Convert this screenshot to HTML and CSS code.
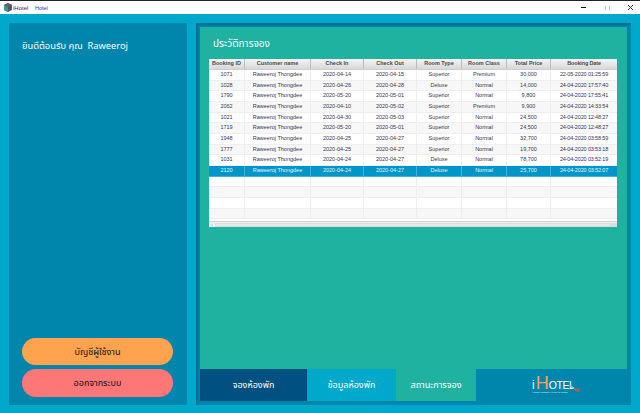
FILE: index.html
```html
<!DOCTYPE html>
<html lang="th">
<head>
<meta charset="utf-8">
<title>iHotel</title>
<link rel="stylesheet" href="styles.css">
</head>
<body>
<header class="titlebar">
  <div class="app">
    <svg class="app-icon" width="8" height="9" viewBox="0 0 8 9"><path d="M4 0 8 2v5L4 9 0 7V2z" fill="#4a5a6a"/><path d="M4 4v5L0 7V2z" fill="#2f9d8f"/><path d="M4 4 8 2 4 0 0 2z" fill="#6b5a78"/></svg>
    <span class="app-name">iHotel</span><span class="app-sub">Hotel</span>
  </div>
  <div class="controls">
    <span class="min"></span>
    <span class="max"></span>
    <svg class="close" width="5" height="5" viewBox="0 0 5 5"><path d="M0 0 5 5M5 0 0 5" stroke="#333" stroke-width="1"/></svg>
  </div>
</header>
<main class="desk">
  <aside class="side">
    <p class="welcome">ยินดีต้อนรับ คุณ&nbsp;&nbsp;Raweeroj</p>
    <div class="side-actions">
      <button class="pill pill-orange">บัญชีผู้ใช้งาน</button>
      <button class="pill pill-red">ออกจากระบบ</button>
    </div>
  </aside>
  <section class="content">
    <div class="sheet">
      <h1 class="sheet-title">ประวัติการจอง</h1>
      <div class="table">
        <div class="row head"><span>Booking ID</span><span>Customer name</span><span>Check In</span><span>Check Out</span><span>Room Type</span><span>Room Class</span><span>Total Price</span><span>Booking Date</span></div>
        <div class="row"><span>1071</span><span>Raweeroj Thongdee</span><span>2020-04-14</span><span>2020-04-15</span><span>Superior</span><span>Premium</span><span>30,000</span><span>22-05-2020 01:25:59</span></div>
        <div class="row alt"><span>1028</span><span>Raweeroj Thongdee</span><span>2020-04-26</span><span>2020-04-28</span><span>Deluxe</span><span>Normal</span><span>14,000</span><span>24-04-2020 17:57:40</span></div>
        <div class="row"><span>1790</span><span>Raweeroj Thongdee</span><span>2020-05-20</span><span>2020-05-01</span><span>Superior</span><span>Normal</span><span>9,800</span><span>24-04-2020 17:55:41</span></div>
        <div class="row alt"><span>2062</span><span>Raweeroj Thongdee</span><span>2020-04-10</span><span>2020-05-02</span><span>Superior</span><span>Premium</span><span>9,900</span><span>24-04-2020 14:33:54</span></div>
        <div class="row"><span>1021</span><span>Raweeroj Thongdee</span><span>2020-04-30</span><span>2020-05-03</span><span>Superior</span><span>Normal</span><span>24,500</span><span>24-04-2020 12:48:27</span></div>
        <div class="row alt"><span>1719</span><span>Raweeroj Thongdee</span><span>2020-05-20</span><span>2020-05-01</span><span>Superior</span><span>Normal</span><span>24,500</span><span>24-04-2020 12:48:27</span></div>
        <div class="row"><span>1948</span><span>Raweeroj Thongdee</span><span>2020-04-25</span><span>2020-04-27</span><span>Superior</span><span>Normal</span><span>32,700</span><span>24-04-2020 03:58:59</span></div>
        <div class="row alt"><span>1777</span><span>Raweeroj Thongdee</span><span>2020-04-25</span><span>2020-04-27</span><span>Superior</span><span>Normal</span><span>19,700</span><span>24-04-2020 03:53:18</span></div>
        <div class="row"><span>1031</span><span>Raweeroj Thongdee</span><span>2020-04-24</span><span>2020-04-27</span><span>Deluxe</span><span>Normal</span><span>78,700</span><span>24-04-2020 03:52:19</span></div>
        <div class="row selected"><span>2120</span><span>Raweeroj Thongdee</span><span>2020-04-24</span><span>2020-04-27</span><span>Deluxe</span><span>Normal</span><span>25,700</span><span>24-04-2020 03:52:07</span></div>
        <div class="row"><span></span><span></span><span></span><span></span><span></span><span></span><span></span><span></span></div>
        <div class="row alt"><span></span><span></span><span></span><span></span><span></span><span></span><span></span><span></span></div>
        <div class="row"><span></span><span></span><span></span><span></span><span></span><span></span><span></span><span></span></div>
        <div class="row alt"><span></span><span></span><span></span><span></span><span></span><span></span><span></span><span></span></div>
        <div class="scrollbar"><span class="arrow">‹</span><span class="track"></span><span class="grip"></span></div>
      </div>
    </div>
    <nav class="tabs">
      <a class="tab tab-book">จองห้องพัก</a>
      <a class="tab tab-room">ข้อมูลห้องพัก</a>
      <a class="tab tab-status">สถานะการจอง</a>
      <div class="logo">
        <div class="logo-box">
          <div class="logo-word"><span class="logo-i">i</span><b>H</b><span class="logo-rest">OTEL</span></div>
          <div class="logo-tag">HOTEL RESERVATION SYSTEM</div>
        </div>
        <svg class="logo-mark" width="10" height="7" viewBox="0 0 10 7"><path d="M0 0 5 3 4 4 0 2z" fill="#8fc6dc"/><path d="M4 3 10 4 9 7 6 6 4 5z" fill="#a0674a"/></svg>
      </div>
    </nav>
  </section>
</main>
</body>
</html>
```
FILE: styles.css
```css
* { box-sizing: border-box; }
html, body { margin: 0; padding: 0; height: 100%; }
body {
  width: 640px;
  height: 413px;
  overflow: hidden;
  display: flex;
  flex-direction: column;
  background: #00a8cc;
  font-family: "Noto Sans", "Noto Sans Thai", "Liberation Sans", sans-serif;
}
.titlebar {
  height: 14px;
  flex: none;
  background: #fff;
  border-top: 1px solid #222;
  display: flex;
  justify-content: space-between;
  align-items: center;
}
.app { display: flex; align-items: center; gap: 1px; padding-left: 4px; }
.app-icon { display: block; }
.app-name { font: 6px "Liberation Sans", sans-serif; color: #402060; width: 21px; }
.app-sub { font: 5.5px "Liberation Sans", sans-serif; color: #333399; }
.controls { display: flex; align-items: center; }
.min { width: 5px; height: 1px; background: #111; margin-right: 19px; }
.max { width: 5px; height: 4px; border-left: 1px solid #bbb; border-right: 1px solid #bbb; margin-right: 18px; }
.close { margin-right: 7px; display: block; }

.desk { flex: 1; display: flex; padding: 9px 9px 8px; gap: 9px; min-height: 0; }
.side {
  width: 178px;
  background: #0085ad;
  display: flex;
  flex-direction: column;
  justify-content: space-between;
  padding: 0 14px 8px 13px;
}
.welcome { margin: 16px 0 0; font-size: 9.3px; line-height: 14px; color: #fff; }
.side-actions { display: flex; flex-direction: column; gap: 4px; }
.pill {
  border: 0;
  padding: 0;
  width: 151px;
  font-family: inherit;
  font-size: 9px;
  color: #111;
  border-radius: 14px;
}
.pill-orange { background: #ffa34f; height: 27px; }
.pill-red { background: #fd7777; height: 28px; }

.content {
  flex: 1;
  background: #0085ad;
  padding: 4px;
  display: flex;
  flex-direction: column;
  box-shadow: inset 2px 2px 2px #006f92;
}
.sheet { flex: 1; background: #1fb2a0; padding: 0 10px 0 9px; display: flex; flex-direction: column; }
.sheet-title { margin: 8px 0 0 4px; height: 24px; font-size: 10px; line-height: 16px; font-weight: 400; color: #fff; }
.table {
  height: 168px;
  background: #fff;
  display: flex;
  flex-direction: column;
  font: 5.5px/1 "Liberation Sans", sans-serif;
  color: #3a3550;
}
.row {
  flex: none;
  height: 10.66px;
  display: grid;
  grid-template-columns: 36px 66px 53px 53px 45px 45px 44px 66px;
  background: #fff;
  border-bottom: 1px solid #eeeeee;
}
.row.alt { background: #f7f7f7; }
.row span {
  display: flex;
  align-items: center;
  justify-content: center;
  white-space: nowrap;
  border-right: 1px solid #eeeeee;
}
.row span:last-child { border-right: 0; letter-spacing: -0.15px; }
.row.head {
  height: 11px;
  font-weight: 700;
  color: #4a4a4a;
  background: linear-gradient(#f4f4f4, #d8d8d8);
  border-bottom: 1px solid #cfcfcf;
}
.row.head span { border-right-color: #bdbdbd; }
.row.selected { background: #0096c9; color: #e4f6fb; border-bottom-color: #3fb2d8; }
.row.selected span { border-right-color: #3fb2d8; }
.scrollbar {
  margin-top: auto;
  height: 6px;
  display: flex;
  align-items: center;
  background: #f1f1f1;
  border-top: 1px solid #cfcfcf;
  color: #999;
}
.arrow { width: 6px; font-size: 5px; text-align: center; }
.track { flex: 1; height: 4px; background: #e8e8e8; border: 1px solid #dcdcdc; }
.grip { width: 6px; height: 4px; background: #dcdcdc; }

.tabs { height: 32px; flex: none; display: flex; }
.tab { display: flex; align-items: center; justify-content: center; font-size: 9px; color: #fff; }
.tab-book { width: 107px; background: #005082; }
.tab-room { width: 89px; background: #00a8cc; }
.tab-status { width: 80px; background: #1fb2a0; }
.logo { flex: 1; display: flex; align-items: center; justify-content: center; padding: 0 0 0 9px; }
.logo-box { display: flex; flex-direction: column; align-items: flex-start; width: 38px; }
.logo-word { font-family: "Liberation Sans", sans-serif; line-height: 13px; height: 13px; color: #fff; white-space: nowrap; display: flex; align-items: baseline; }
.logo-i { font-size: 12px; margin-right: 1px; }
.logo-word b { font-size: 18px; font-weight: 400; color: #ffa34f; letter-spacing: -1px; }
.logo-rest { font-size: 10.5px; letter-spacing: -0.4px; margin-left: 1px; }
.logo-tag { margin-top: 1px; font: 2.4px/3px "Liberation Sans", sans-serif; color: #d8f1f8; white-space: nowrap; width: 36px; overflow: hidden; }
.logo-mark { align-self: flex-end; margin: 0 0 9px 0; }
```
